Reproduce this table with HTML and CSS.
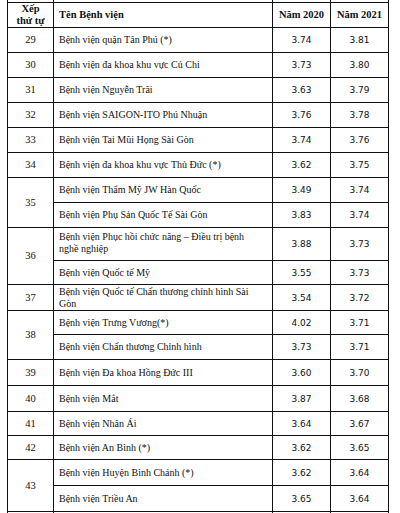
FILE: index.html
```html
<!DOCTYPE html>
<html lang="vi">
<head>
<meta charset="utf-8">
<link rel="stylesheet" href="styles.css">
</head>
<body>
<table class="rank-table">
  <colgroup>
    <col class="c-rank"><col class="c-name"><col class="c-num"><col class="c-num">
  </colgroup>
  <tbody>
    <tr class="filler"><td></td><td></td><td></td><td></td></tr>
    <tr class="head">
      <th class="rank">Xếp<br>thứ tự</th>
      <th class="name">Tên Bệnh viện</th>
      <th class="num">Năm 2020</th>
      <th class="num">Năm 2021</th>
    </tr>
    <tr><td class="rank">29</td><td class="name">Bệnh viện quận Tân Phú (*)</td><td class="num">3.74</td><td class="num">3.81</td></tr>
    <tr><td class="rank">30</td><td class="name">Bệnh viện đa khoa khu vực Củ Chi</td><td class="num">3.73</td><td class="num">3.80</td></tr>
    <tr><td class="rank">31</td><td class="name">Bệnh viện Nguyễn Trãi</td><td class="num">3.63</td><td class="num">3.79</td></tr>
    <tr><td class="rank">32</td><td class="name">Bệnh viện SAIGON-ITO Phú Nhuận</td><td class="num">3.76</td><td class="num">3.78</td></tr>
    <tr><td class="rank">33</td><td class="name">Bệnh viện Tai Mũi Họng Sài Gòn</td><td class="num">3.74</td><td class="num">3.76</td></tr>
    <tr><td class="rank">34</td><td class="name">Bệnh viện đa khoa khu vực Thủ Đức (*)</td><td class="num">3.62</td><td class="num">3.75</td></tr>
    <tr><td class="rank" rowspan="2">35</td><td class="name">Bệnh viện Thẩm Mỹ JW Hàn Quốc</td><td class="num">3.49</td><td class="num">3.74</td></tr>
    <tr><td class="name">Bệnh viện Phụ Sản Quốc Tế Sài Gòn</td><td class="num">3.83</td><td class="num">3.74</td></tr>
    <tr class="tall"><td class="rank" rowspan="2">36</td><td class="name two">Bệnh viện Phục hồi chức năng – Điều trị bệnh<br>nghề nghiệp</td><td class="num">3.88</td><td class="num">3.73</td></tr>
    <tr class="short"><td class="name">Bệnh viện Quốc tế Mỹ</td><td class="num">3.55</td><td class="num">3.73</td></tr>
    <tr><td class="rank">37</td><td class="name two">Bệnh viện Quốc tế Chấn thương chỉnh hình Sài<br>Gòn</td><td class="num">3.54</td><td class="num">3.72</td></tr>
    <tr class="short"><td class="rank" rowspan="2">38</td><td class="name">Bệnh viện Trưng Vương(*)</td><td class="num">4.02</td><td class="num">3.71</td></tr>
    <tr><td class="name">Bệnh viện Chấn thương Chỉnh hình</td><td class="num">3.73</td><td class="num">3.71</td></tr>
    <tr class="big"><td class="rank">39</td><td class="name">Bệnh viện Đa khoa Hồng Đức III</td><td class="num">3.60</td><td class="num">3.70</td></tr>
    <tr class="big"><td class="rank">40</td><td class="name">Bệnh viện Mắt</td><td class="num">3.87</td><td class="num">3.68</td></tr>
    <tr class="short"><td class="rank">41</td><td class="name">Bệnh viện Nhân Ái</td><td class="num">3.64</td><td class="num">3.67</td></tr>
    <tr class="short"><td class="rank">42</td><td class="name">Bệnh viện An Bình (*)</td><td class="num">3.62</td><td class="num">3.65</td></tr>
    <tr class="big"><td class="rank" rowspan="2">43</td><td class="name">Bệnh viện Huyện Bình Chánh (*)</td><td class="num">3.62</td><td class="num">3.64</td></tr>
    <tr class="big"><td class="name">Bệnh viện Triều An</td><td class="num">3.65</td><td class="num">3.64</td></tr>
    <tr class="tail"><td></td><td></td><td></td><td></td></tr>
  </tbody>
</table>
</body>
</html>
```
FILE: styles.css
```css
html, body {
  margin: 0;
  padding: 0;
  background: #fff;
  overflow: hidden;
}
body {
  height: 513px;
  font-family: "Liberation Serif", "Times New Roman", serif;
  color: #111;
}
.rank-table {
  margin-left: 7px;
  border-collapse: collapse;
  table-layout: fixed;
  width: 382px;
}
.c-rank { width: 46px; }
.c-name { width: 219px; }
.c-num { width: 58px; }
.rank-table td,
.rank-table th {
  border: 1px solid #111;
  padding: 0;
  height: 24px;
  vertical-align: middle;
  font-size: 10.5px;
  line-height: 12px;
  font-weight: normal;
}
.rank-table th {
  font-weight: bold;
}
.rank-table td.name {
  font-size: 10px;
}
.rank-table .filler td {
  height: 2px;
  border-top: none;
}
.rank-table .head th { height: 23px; }
.rank-table .tall td { height: 29px; }
.rank-table .short td { height: 23px; }
.rank-table .big td { height: 25px; }
.rank-table .tail td { height: 10px; border-bottom: none; }
.rank { text-align: center; }
.name {
  text-align: left;
  padding-left: 5px !important;
}
.rank-table td.num {
  text-align: center;
  font-family: "DejaVu Sans", "Liberation Sans", sans-serif;
  font-size: 9px;
}
.rank-table th.num { text-align: center; }
.rank-table td.name.two { vertical-align: top; padding-top: 1px; }
.rank-table .tall td.name.two { padding-top: 3px; }
```
